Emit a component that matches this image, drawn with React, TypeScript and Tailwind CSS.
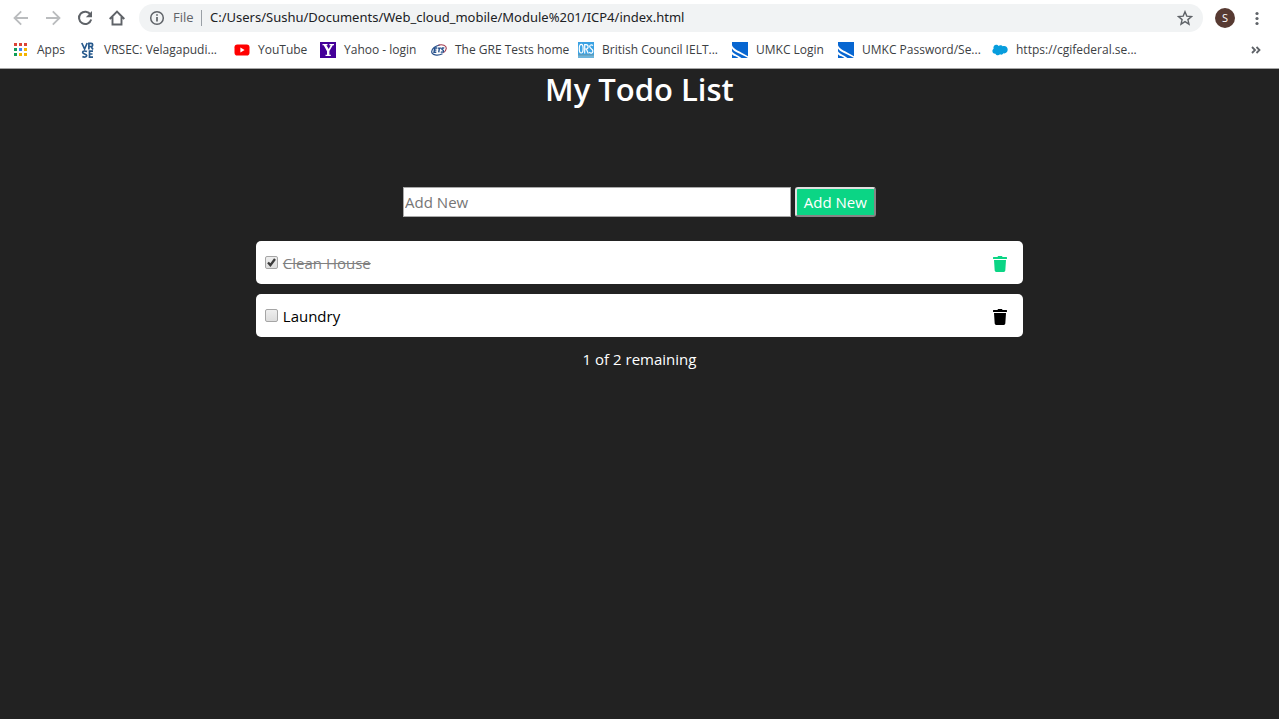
import { useState } from "react";
import type { FormEvent, ReactNode } from "react";

type Todo = { id: number; text: string; done: boolean };

function AppsIcon() {
  const colors = ["#db4437", "#db4437", "#db4437", "#0f9d58", "#4285f4", "#f4b400", "#0f9d58", "#f4b400", "#f4b400"];
  return (
    <svg viewBox="0 0 16 16" className="size-4" aria-hidden="true">
      {colors.map((c, i) => (
        <rect key={i} x={(i % 3) * 5 + 1} y={Math.floor(i / 3) * 5 + 1} width="3" height="3" fill={c} />
      ))}
    </svg>
  );
}

function VrseIcon() {
  return (
    <svg viewBox="0 0 16 16" className="size-4" aria-hidden="true" fill="none" stroke="#27598c" strokeWidth="1.7">
      <path d="M1.8 1 4.6 7 7.2 1M8.9 7.4V1.4h2.2q1.6 0 1.6 1.5t-1.6 1.6H9m2 0 2 2.9" />
      <path d="M7 9.6Q6 9 4.4 9q-1.700 0-1.700 1.500c0 1.700 4 1.200 4 3.100 0 1.500-2.600 2-4.300 1M13 9.200H9.500v5.900H13M9.500 12h3" />
    </svg>
  );
}

function YouTubeIcon() {
  return (
    <svg viewBox="0 0 16 16" className="size-4" aria-hidden="true">
      <rect x="0.500" y="2.500" width="15" height="11" rx="2.800" fill="#f00" />
      <path d="M6.400 5.600v4.800L10.600 8z" fill="#fff" />
    </svg>
  );
}

function YahooIcon() {
  return (
    <svg viewBox="0 0 16 16" className="size-4" aria-hidden="true">
      <rect width="16" height="16" fill="#440099" />
      <path d="M2.500 2h5v1.200H6.400L8.700 7l2-3.800H9.400V2H14v1.200h-1.200L9.400 9.100v3.600h1.400V14H5.500v-1.300H7V9.200L3.700 3.200H2.500z" fill="#fff" />
    </svg>
  );
}

function EtsIcon() {
  return (
    <svg viewBox="0 0 16 16" className="size-4" aria-hidden="true" fill="none">
      <path d="M11.500 11.800C6.500 14.200.6 13 .7 9.500.8 6.800 4.400 3.800 8.600 3" stroke="#28518b" strokeWidth="1.200" />
      <path d="M7.500 3.100c4-1 7.900.2 7.800 3.200-.1 1.800-1.200 3.400-3 4.500" stroke="#a33c50" strokeWidth="1.100" />
      <path d="M6.100 6H3.700L3 10.200h2.300M3.300 8.100h2.100M6.700 6.100h3.400M8.400 6.100l-.7 4.300M13.300 6.200c-1.200-.5-2.500-.3-2.500.7s2 .9 1.800 2.200c-.1 1.100-1.700 1.300-2.800.8" stroke="#24508c" strokeWidth="1.400" />
    </svg>
  );
}

function OrsIcon() {
  return (
    <svg viewBox="0 0 16 16" className="size-4" aria-hidden="true" fill="none">
      <rect width="16" height="16" fill="#3ba2e3" />
      <rect y="13" width="16" height="3" fill="#6db5dc" />
      <rect y="12.500" width="16" height="1" fill="#6b98aa" />
      <ellipse cx="3.200" cy="6.700" rx="1.900" ry="4.300" stroke="#fff" strokeWidth="1.200" />
      <path d="M6.700 11.500V2.700h1.400q2 0 2 2.100T8.100 7H6.900m1.400 0 2 4.500M15 3.600c-1.700-1.300-3.300-.7-3.300 1 0 2.200 3.200 2.200 3.200 4.500 0 2.200-2.100 2.700-3.700 1.200" stroke="#fff" strokeWidth="1.200" />
    </svg>
  );
}

function UmkcIcon() {
  return (
    <svg viewBox="0 0 16 16" className="size-4" aria-hidden="true">
      <rect width="16" height="16" fill="#0766d1" />
      <path d="M0 3.200c1.500 4.200 7.500 5.800 16 11V16C9 11.500 2 10.500 0 6.500z" fill="#fff" />
      <path d="M0 9.200c1.500 3 5.700 3.300 9.500 6.800H6.400C4 13.700 1 14 0 12.200z" fill="#fff" />
    </svg>
  );
}

function CloudIcon() {
  return (
    <svg viewBox="0 0 16 16" className="size-4" aria-hidden="true" fill="#079ddd">
      <path d="M6.600 4.100c.7-.8 1.500-1 2.400-.8.700.1 1.200.5 1.600 1 2.600-1.100 5.200.7 5.100 3.500-.1 2.400-1.900 4-4.200 3.500-.8 1.400-2.200 1.800-3.500 1-1.200 1.600-3.900 1.400-4.500-.6C1.600 11.900.3 10.500.4 8.900c0-.9.500-1.700 1.200-2.200-.7-2.200.7-4 2.700-4 .9 0 1.800.5 2.300 1.400z" />
    </svg>
  );
}

const bookmarks: { label: string; icon: ReactNode; width: string }[] = [
  { label: "Apps", icon: <AppsIcon />, width: "w-[27px]" },
  { label: "VRSEC: Velagapudi...", icon: <VrseIcon />, width: "w-[114px]" },
  { label: "YouTube", icon: <YouTubeIcon />, width: "w-[46px]" },
  { label: "Yahoo - login", icon: <YahooIcon />, width: "w-[71px]" },
  { label: "The GRE Tests home", icon: <EtsIcon />, width: "w-[107px]" },
  { label: "British Council IELT...", icon: <OrsIcon />, width: "w-[114px]" },
  { label: "UMKC Login", icon: <UmkcIcon />, width: "w-[66px]" },
  { label: "UMKC Password/Se...", icon: <UmkcIcon />, width: "w-[114px]" },
  { label: "https://cgifederal.se...", icon: <CloudIcon />, width: "w-auto" },
];

function NavButton({ label, muted, children }: { label: string; muted?: boolean; children: ReactNode }) {
  return (
    <button type="button" aria-label={label} className={muted ? "text-[#babcbe]" : "text-[#5f6368]"}>
      <svg viewBox="0 0 16 16" className="size-4" fill="none" stroke="currentColor" strokeWidth="2" aria-hidden="true">
        {children}
      </svg>
    </button>
  );
}

function BrowserBar() {
  return (
    <header className="border-b border-[#a5a5a5] bg-white">
      <div className="flex h-9 items-center pr-3.5 pl-[13px]">
        <nav aria-label="Navigation" className="flex gap-4">
          <NavButton label="Back" muted><path d="M15 8H2M8.200 1.300 1.500 8l6.700 6.700" strokeWidth="1.800" /></NavButton>
          <NavButton label="Forward" muted><path d="M1 8h13M7.800 1.300 14.500 8l-6.700 6.700" strokeWidth="1.800" /></NavButton>
          <NavButton label="Reload">
            <path d="M13.500 4.600A6.200 6.200 0 1 0 14.200 9.500" />
            <path d="M15 1v6.200H8.800z" fill="currentColor" stroke="none" />
          </NavButton>
          <NavButton label="Home"><path d="M.7 9 8 1.600 15.300 9M3.500 7v7.500h9V7" strokeWidth="1.900" /></NavButton>
        </nav>
        <div className="ml-3.5 flex h-7 min-w-0 flex-1 items-center rounded-full bg-[#f1f3f4] px-2.5 text-[#5f6368]">
          <svg viewBox="0 0 16 16" className="size-4 shrink-0" fill="none" stroke="currentColor" strokeWidth="1.500" aria-hidden="true">
            <circle cx="8" cy="8" r="6.300" />
            <path d="M8 7v4.500M8 4.200v1.600" strokeWidth="1.700" />
          </svg>
          <span className="ml-2 w-5 text-[13px]">File</span>
          <span className="ml-2 h-4 w-px bg-[#9aa0a6]" />
          <input
            type="text"
            aria-label="Address"
            defaultValue="C:/Users/Sushu/Documents/Web_cloud_mobile/Module%201/ICP4/index.html"
            className="ml-2 min-w-0 flex-1 bg-transparent font-['Noto_Sans',sans-serif] text-[13px] text-[#202124] outline-none"
          />
          <button type="button" aria-label="Bookmark this page">
            <svg viewBox="0 0 16 16" className="size-4" fill="none" stroke="currentColor" strokeWidth="1.400" aria-hidden="true">
              <path d="m8 1.700 1.800 4.400 4.700.4-3.600 3.100 1.100 4.600L8 11.700l-4 2.500 1.100-4.600-3.600-3.100 4.700-.4z" />
            </svg>
          </button>
        </div>
        <button type="button" aria-label="Profile" className="ml-3 size-5 rounded-full bg-[#573a32] text-[11px] leading-5 text-white">S</button>
        <button type="button" aria-label="Menu" className="ml-3.5 text-[#5f6368]">
          <svg viewBox="0 0 16 16" className="size-4" fill="currentColor" aria-hidden="true">
            <circle cx="8" cy="3.500" r="1.600" />
            <circle cx="8" cy="8.500" r="1.600" />
            <circle cx="8" cy="13.500" r="1.600" />
          </svg>
        </button>
      </div>
      <div className="flex h-8 items-start justify-between pr-[17px] pl-[13px]">
        <nav aria-label="Bookmarks" className="flex min-w-0 gap-4 pt-1.5">
          {bookmarks.map((b) => (
            <a key={b.label} href="#" className="flex shrink-0 items-center gap-2 text-xs whitespace-nowrap text-[#3c4043]">
              {b.icon}
              <span className={b.width}>{b.label}</span>
            </a>
          ))}
        </nav>
        <button type="button" aria-label="More bookmarks" className="mt-1.5 text-[#5f6368]">
          <svg viewBox="0 0 12 16" className="h-4 w-3" fill="none" stroke="currentColor" strokeWidth="1.800" aria-hidden="true">
            <path d="m2 5 3 3-3 3M6.500 5l3 3-3 3" />
          </svg>
        </button>
      </div>
    </header>
  );
}

function TodoRow({ todo, onToggle, onDelete }: { todo: Todo; onToggle: () => void; onDelete: () => void }) {
  return (
    <li className="flex h-[43px] items-center justify-between rounded-[5px] bg-white pt-0.5 pr-4 pl-[9px]">
      <label className={todo.done ? "flex items-center gap-[5px] text-[#808080] line-through" : "flex items-center gap-[5px] text-black"}>
        <span className="relative mb-0.5 flex">
          <input
            type="checkbox"
            checked={todo.done}
            onChange={onToggle}
            className="size-[13px] appearance-none rounded-[2px] border border-[#a5a5a5] bg-linear-to-b from-[#eeeeee] to-[#dddddd]"
          />
          {todo.done && (
            <svg viewBox="0 0 13 13" className="pointer-events-none absolute inset-0 size-[13px]" fill="none" stroke="#3b3b3b" strokeWidth="2.300" aria-hidden="true">
              <path d="m3 6.500 2.400 2.600L10 3" />
            </svg>
          )}
        </span>
        {todo.text}
      </label>
      <button type="button" aria-label={`Delete ${todo.text}`} onClick={onDelete} className={todo.done ? "text-[#0bd585]" : "text-black"}>
        <svg viewBox="0 0 14 16" className="h-4 w-3.5" fill="currentColor" aria-hidden="true">
          <path d="M.5 1h4l.5-1h4l.5 1h4q.5 0 .5.500v1q0 .5-.5.500H.5Q0 3 0 2.500v-1Q0 1 .5 1zM1 4h12l-.7 10.600q-.1 1.400-1.500 1.400H3.200q-1.400 0-1.500-1.400z" />
        </svg>
      </button>
    </li>
  );
}

export default function App() {
  const [draft, setDraft] = useState("");
  const [todos, setTodos] = useState<Todo[]>([
    { id: 1, text: "Clean House", done: true },
    { id: 2, text: "Laundry", done: false },
  ]);

  const addTodo = (e: FormEvent) => {
    e.preventDefault();
    const text = draft.trim();
    if (!text) return;
    setTodos([...todos, { id: Date.now(), text, done: false }]);
    setDraft("");
  };

  return (
    <div className="flex min-h-screen flex-col bg-[#222222] font-['Open_Sans','Noto_Sans',sans-serif]">
      <BrowserBar />
      <main className="text-center text-[15px] text-white">
        <h1 className="text-[31px] leading-10 font-semibold">My Todo List</h1>
        <form onSubmit={addTodo} className="mt-[78px] flex justify-center gap-1">
          <input
            type="text"
            aria-label="New item"
            placeholder="Add New"
            value={draft}
            onChange={(e) => setDraft(e.target.value)}
            className="box-content h-7 w-[30%] border border-[#a9a9a9] bg-white px-px text-black placeholder:text-[#757575]"
          />
          <button type="submit" className="h-[30px] rounded-[3px] border-2 border-t-[#e0e0e0] border-r-[#858585] border-b-[#858585] border-l-[#e0e0e0] bg-[#0bd585] px-[7px]">
            Add New
          </button>
        </form>
        <ul className="mx-auto mt-6 flex w-3/5 flex-col gap-2.5">
          {todos.map((t) => (
            <TodoRow
              key={t.id}
              todo={t}
              onToggle={() => setTodos(todos.map((o) => (o.id === t.id ? { ...o, done: !o.done } : o)))}
              onDelete={() => setTodos(todos.filter((o) => o.id !== t.id))}
            />
          ))}
        </ul>
        <p className="mt-3 leading-5">
          {todos.filter((t) => !t.done).length} of {todos.length} remaining
        </p>
      </main>
    </div>
  );
}
